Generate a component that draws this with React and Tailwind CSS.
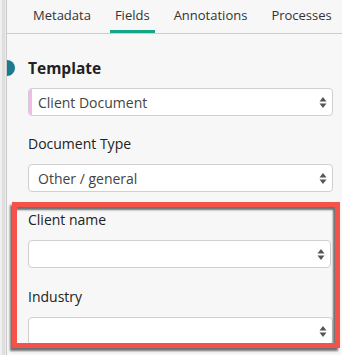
import React from "react";

function Arrows() {
  return (
    <svg width="8" height="13" viewBox="0 0 8 13" className="shrink-0">
      <path d="M4 1 L7.5 5.5 L0.5 5.5 Z" fill="#555" />
      <path d="M4 12 L7.5 7.5 L0.5 7.5 Z" fill="#555" />
    </svg>
  );
}

function Select({ value = "", accent = false }) {
  return (
    <div className="flex h-[28px] items-center overflow-hidden rounded-[4px] border border-[#cfcfcf] bg-white pr-[5px]">
      {accent && <div className="h-full w-[3px] shrink-0 bg-[#f6b6ee]" />}
      <div className={`flex-1 text-[14px] text-[#444] ${accent ? "pl-[6px]" : "pl-[9px]"}`}>{value}</div>
      <Arrows />
    </div>
  );
}

function Label({ children, className = "" }) {
  return <div className={`h-[20px] text-[14px] leading-[20px] text-[#222] ${className}`}>{children}</div>;
}

const tabs = ["Metadata", "Fields", "Annotations", "Processes"];

export default function App() {
  return (
    <div
      className="relative flex h-[355px] w-[342px] overflow-hidden bg-[#f7f7f7]"
      style={{ fontFamily: '"Open Sans", "Noto Sans", sans-serif' }}
    >
      {/* sidebar edge */}
      <div className="flex h-full w-[7px] shrink-0">
        <div className="w-[2px] bg-[#efefef]" />
        <div className="w-[3px] bg-[#dedede]" />
        <div className="w-[1px] bg-[#ebebeb]" />
        <div className="w-[1px] bg-[#c9c9c9]" />
      </div>

      <div className="relative flex-1 overflow-hidden">
        <div className="flex h-[34px] border-b border-[#cccccc] pl-[14px]">
          {tabs.map((t) => (
            <div
              key={t}
              className={`mx-[7px] flex h-[33px] items-center px-[5px] pt-[1px] text-[13px] text-[#333] ${
                t === "Fields" ? "border-b-[3px] border-[#13a689]" : "border-b-[3px] border-transparent"
              }`}
            >
              {t}
            </div>
          ))}
        </div>

        <div className="pr-[9px] pl-[21px]">
          <div className="mt-[24px] h-[20px] text-[15.5px] leading-[20px] font-bold text-[#222]">Template</div>
          <div className="mt-[10px]">
            <Select value="Client Document" accent />
          </div>

          <Label className="mt-[18px]">Document Type</Label>
          <div className="mt-[10px]">
            <Select value="Other / general" />
          </div>

          <Label className="mt-[18px]">Client name</Label>
          <div className="mt-[10px] mr-[2px]">
            <Select />
          </div>

          <Label className="mt-[19px]">Industry</Label>
          <div className="mt-[10px]">
            <Select />
          </div>
        </div>

        {/* teal marker */}
        <div className="absolute top-[60px] left-[-8px] h-[16px] w-[16px] rounded-full bg-[#1a7b90]" />
      </div>

      {/* annotation box */}
      <div className="pointer-events-none absolute top-[202px] left-[12px] h-[146px] w-[328px] border-[5px] border-[#f5524a] shadow-[-2px_3px_2px_rgba(0,0,0,0.55),inset_-2px_3px_2px_rgba(0,0,0,0.55)]" />
    </div>
  );
}
